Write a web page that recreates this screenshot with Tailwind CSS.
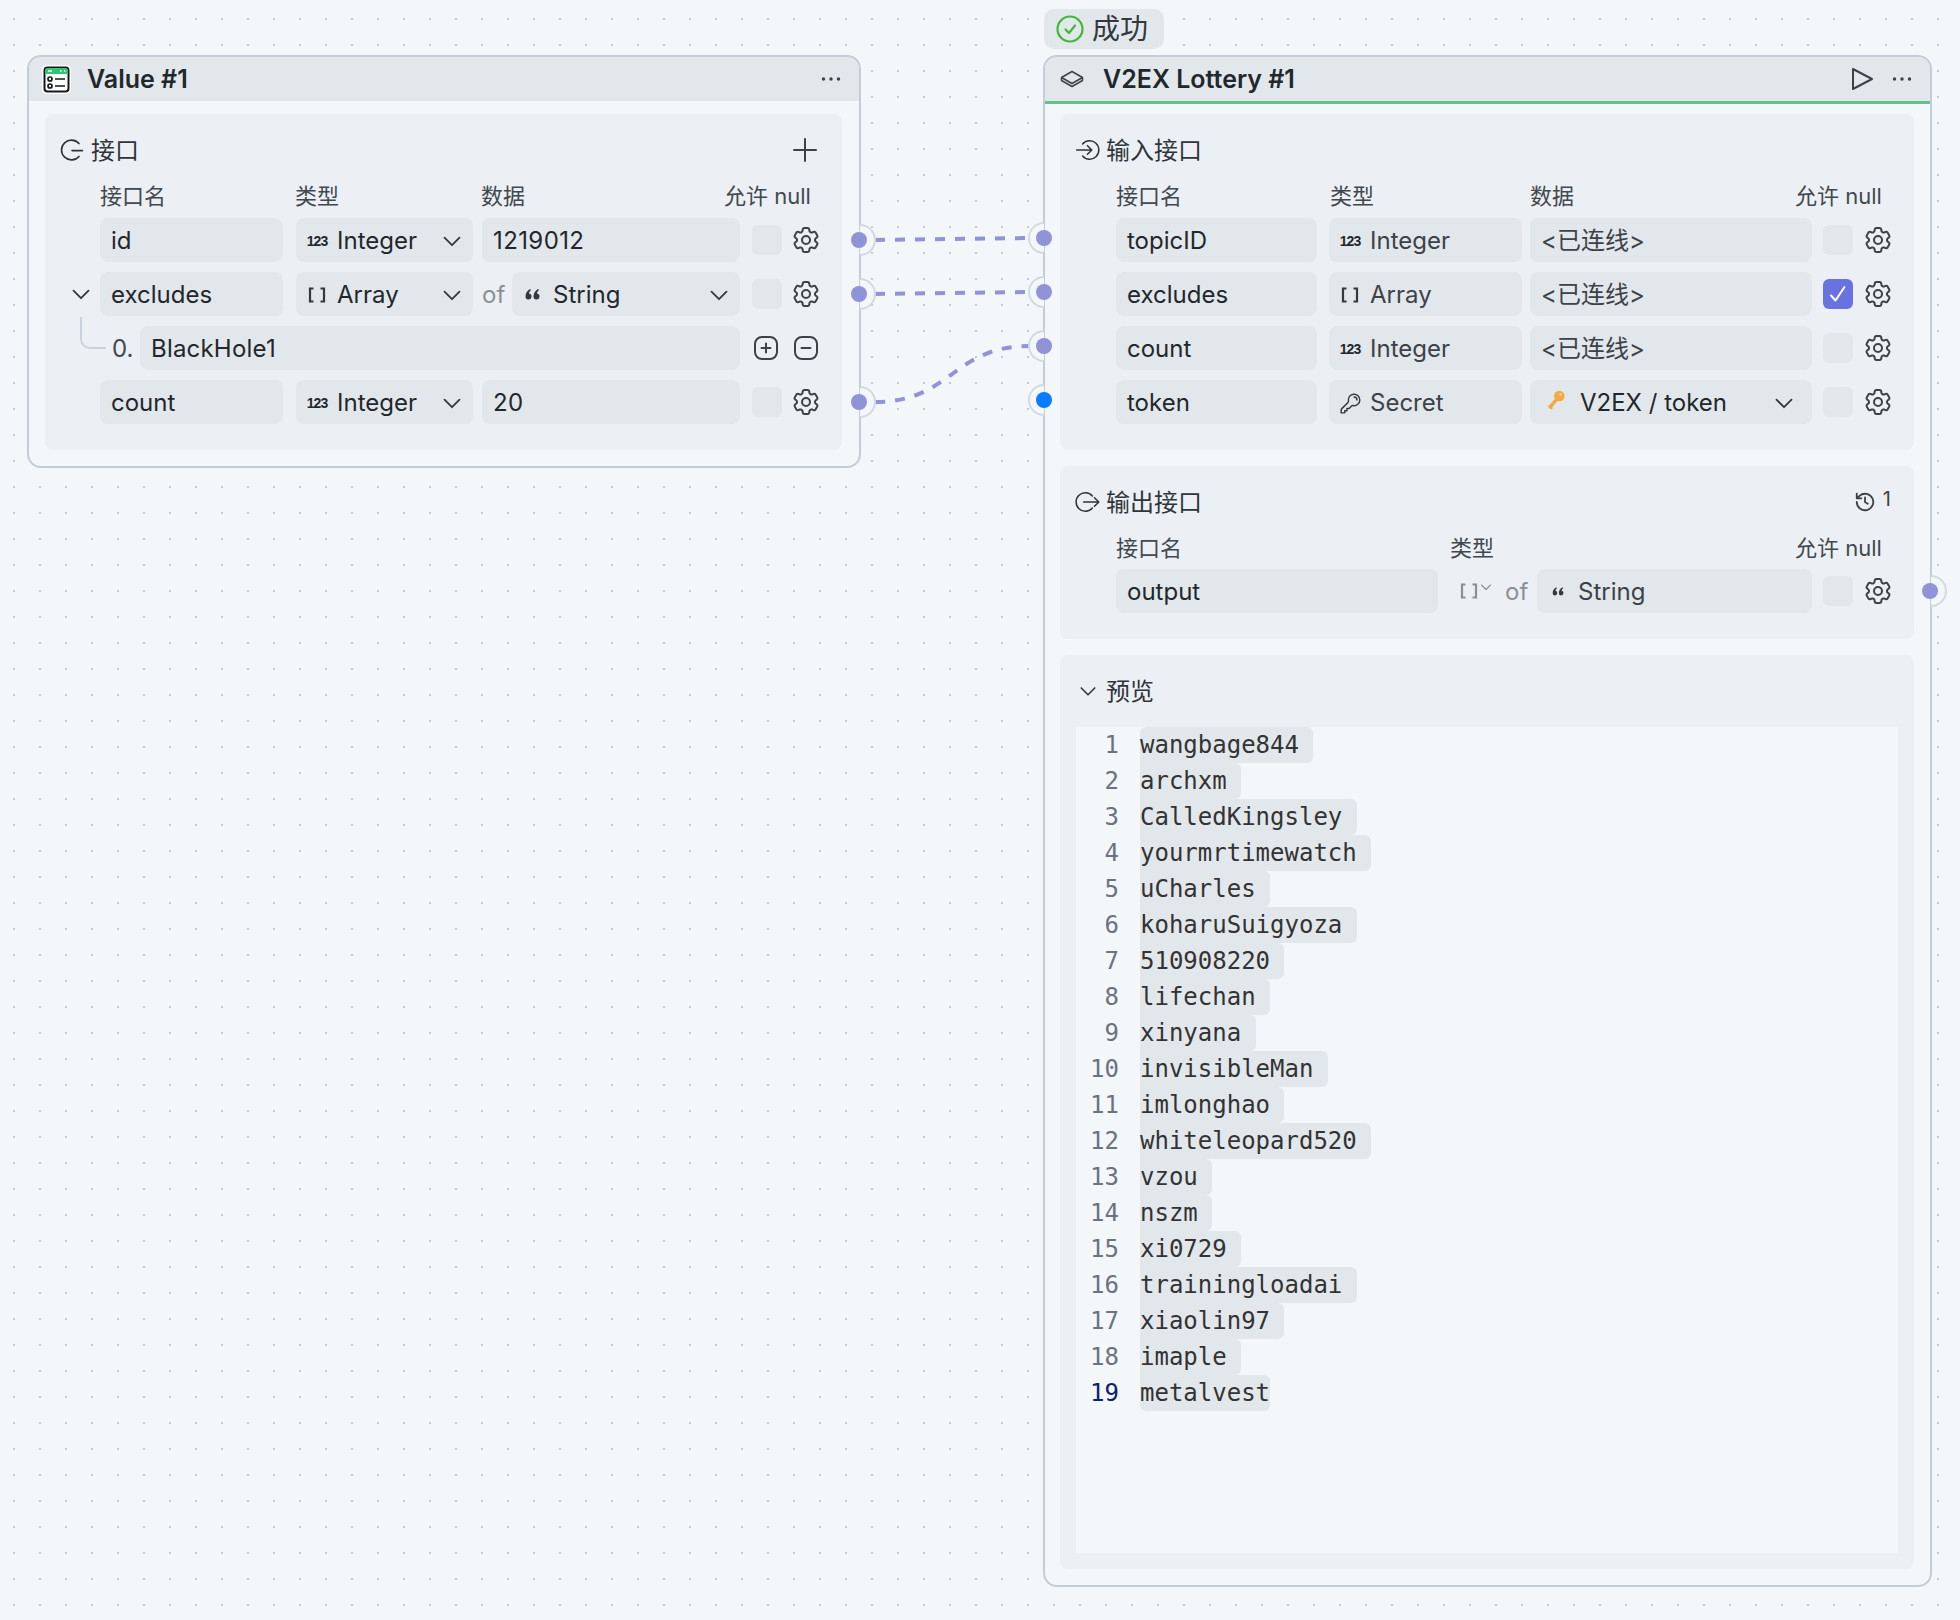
<!DOCTYPE html>
<html lang="en">
<head>
  <meta charset="UTF-8">
  <title>Workflow canvas</title>
  <script src="https://cdn.jsdelivr.net/npm/@tailwindcss/browser@4"></script>
</head>
<body class="m-0">
  <!-- shared icons -->
  <svg class="hidden">
    <symbol id="gear" viewBox="0 0 24 24"><path fill="none" stroke="currentColor" stroke-width="1.5" stroke-linecap="round" stroke-linejoin="round" d="M9.594 3.94c.09-.542.56-.94 1.11-.94h2.593c.55 0 1.02.398 1.11.94l.213 1.281c.063.374.313.686.645.87.074.04.147.083.22.127.325.196.72.257 1.075.124l1.217-.456a1.125 1.125 0 0 1 1.37.49l1.296 2.247a1.125 1.125 0 0 1-.26 1.431l-1.003.827c-.293.241-.438.613-.43.992a7.723 7.723 0 0 1 0 .255c-.008.378.137.75.43.991l1.004.827c.424.35.534.955.26 1.43l-1.298 2.247a1.125 1.125 0 0 1-1.369.491l-1.217-.456c-.355-.133-.75-.072-1.076.124a6.47 6.47 0 0 1-.22.128c-.331.183-.581.495-.644.869l-.213 1.281c-.09.543-.56.94-1.11.94h-2.594c-.55 0-1.019-.398-1.11-.94l-.213-1.281c-.062-.374-.312-.686-.644-.87a6.52 6.52 0 0 1-.22-.127c-.325-.196-.72-.257-1.076-.124l-1.217.456a1.125 1.125 0 0 1-1.369-.49l-1.297-2.247a1.125 1.125 0 0 1 .26-1.431l1.004-.827c.292-.24.437-.613.43-.991a6.932 6.932 0 0 1 0-.255c.007-.38-.138-.751-.43-.992l-1.004-.827a1.125 1.125 0 0 1-.26-1.43l1.297-2.247a1.125 1.125 0 0 1 1.37-.491l1.216.456c.356.133.751.072 1.076-.124.072-.044.146-.086.22-.128.332-.183.582-.495.644-.869l.214-1.28Z"/><circle cx="12" cy="12" r="3" fill="none" stroke="currentColor" stroke-width="1.5"/></symbol>
    <symbol id="chev" viewBox="0 0 24 24"><path fill="none" stroke="currentColor" stroke-width="2.2" stroke-linecap="round" stroke-linejoin="round" d="M3 8l9 9 9-9"/></symbol>
    <symbol id="brackets" viewBox="0 0 22 22"><path fill="none" stroke="currentColor" stroke-width="2.2" d="M7.5 4.5H4v13h3.5M14.500 4.500H18v13h-3.500"/></symbol>
    <symbol id="quote" viewBox="0 0 22 22"><path fill="currentColor" d="M8 5C5 7 3.500 9 3.500 12.500a3 3 0 1 0 3.500-3C7 8 8 7 9 6ZM16 5c-3 2-4.500 4-4.500 7.500a3 3 0 1 0 3.500-3c0-1.500 1-2.500 2-3.500Z"/></symbol>
    <symbol id="dots" viewBox="0 0 20 4"><circle cx="2.500" cy="2" r="1.700" fill="currentColor"/><circle cx="10" cy="2" r="1.700" fill="currentColor"/><circle cx="17.500" cy="2" r="1.700" fill="currentColor"/></symbol>
  </svg>

  <div class="relative w-[1960px] h-[1620px] overflow-hidden bg-[#f3f7fa] bg-[radial-gradient(circle,#c2cad3_1px,transparent_1.5px)] bg-[size:26px_26px] bg-[position:1px_6px] font-['Inter','Noto_Sans_CJK_SC',sans-serif] text-[24px] text-[#22272c]">

    <!-- edges -->
    <svg class="absolute left-0 top-0" width="1960" height="1620" fill="none" stroke="#9193d9" stroke-width="4" stroke-dasharray="10 10">
      <path d="M875 240 L1030 238"/>
      <path d="M875 294 L1030 292"/>
      <path d="M875 402 C952 402 952 346 1030 346"/>
    </svg>

    <!-- Value node -->
    <div class="absolute left-[27px] top-[55px] w-[834px] h-[413px] rounded-[14px] border-2 border-[#c3cdd8] bg-[#f3f7fa] overflow-hidden">
      <div class="h-[44px] bg-[#e2e7ec] flex items-center pl-[13px] pr-[18px]">
        <svg class="w-[29px] h-[29px]" viewBox="0 0 29 29">
          <rect width="29" height="29" rx="5" fill="#fff"/>
          <rect x="2.500" y="2.500" width="24" height="24" rx="3" fill="#fff" stroke="#14181b" stroke-width="2"/>
          <path d="M3 5.500a2.500 2.500 0 0 1 2.500-2.500h18a2.500 2.500 0 0 1 2.500 2.500V9H3Z" fill="#2fc573"/>
          <path d="M6 6h4M18 6h1.500M22 6h1.500" stroke="#fff" stroke-width="1.300"/>
          <circle cx="8" cy="14" r="2" fill="none" stroke="#14181b" stroke-width="1.700"/>
          <circle cx="8" cy="21" r="2" fill="none" stroke="#14181b" stroke-width="1.700"/>
          <path d="M13 14h10M13 21h10" stroke="#14181b" stroke-width="1.700"/>
        </svg>
        <span class="ml-[16px] mt-[2px] text-[25px] font-semibold">Value #1</span>
        <svg class="ml-auto w-[20px] h-[4px] text-[#3c4248]"><use href="#dots"/></svg>
      </div>

      <div class="mt-[13px] ml-[16px] w-[797px] h-[336px] rounded-[8px] bg-[#ecf0f4] pt-[18px]">
        <div class="h-[36px] flex items-center pl-[13px] pr-[24px]">
          <svg class="w-[28px] h-[28px] text-[#2f353a]" viewBox="0 0 24 24" fill="none" stroke="currentColor" stroke-width="1.400" stroke-linecap="round"><path d="M18 6.500A8.500 8.500 0 1 0 18 17.500M12 12.500h9"/></svg>
          <span class="ml-[5px] mt-[2px] text-[#2f353a]">接口</span>
          <svg class="ml-auto w-[26px] h-[26px] text-[#3c4248]" viewBox="0 0 26 26" fill="none" stroke="currentColor" stroke-width="2" stroke-linecap="round"><path d="M13 2v22M2 13h22"/></svg>
        </div>

        <div class="mt-[14px] mb-[8px] h-[28px] flex items-center text-[22px] text-[#41484f]">
          <span class="ml-[55px] w-[195px]">接口名</span>
          <span class="w-[186px]">类型</span>
          <span class="w-[243px]">数据</span>
          <span>允许 null</span>
        </div>

        <div class="flex flex-col gap-[10px]">
          <div class="flex items-center h-[44px] pl-[55px]">
            <div class="w-[183px] h-[44px] pt-[2px] rounded-[8px] bg-[#e2e7eb] flex items-center px-[11px]">id</div>
            <div class="ml-[13px] w-[177px] h-[44px] pt-[2px] rounded-[8px] bg-[#e2e7eb] flex items-center pl-[10px] pr-[11px]">
              <span class="w-[22px] text-[14px] font-semibold tracking-[-1px] text-center font-['Liberation_Sans']">123</span>
              <span class="ml-[9px]">Integer</span>
              <svg class="ml-auto w-[20px] h-[20px] text-[#33393f]"><use href="#chev"/></svg>
            </div>
            <div class="ml-[9px] w-[258px] h-[44px] pt-[2px] rounded-[8px] bg-[#e2e7eb] flex items-center px-[11px] tracking-[0.4px]">1219012</div>
            <div class="ml-[12px] w-[30px] h-[30px] rounded-[6px] bg-[#e2e7eb]"></div>
            <svg class="ml-[8px] w-[32px] h-[32px] text-[#3c4248]"><use href="#gear"/></svg>
          </div>

          <div class="flex items-center h-[44px]">
            <div class="w-[55px] flex justify-end pr-[9px]"><svg class="w-[20px] h-[20px] text-[#33393f]"><use href="#chev"/></svg></div>
            <div class="w-[183px] h-[44px] pt-[2px] rounded-[8px] bg-[#e2e7eb] flex items-center px-[11px]">excludes</div>
            <div class="ml-[13px] w-[177px] h-[44px] pt-[2px] rounded-[8px] bg-[#e2e7eb] flex items-center pl-[10px] pr-[11px]">
              <svg class="w-[22px] h-[22px] text-[#33393f]"><use href="#brackets"/></svg>
              <span class="ml-[9px]">Array</span>
              <svg class="ml-auto w-[20px] h-[20px] text-[#33393f]"><use href="#chev"/></svg>
            </div>
            <span class="ml-[9px] mt-[2px] w-[30px] text-[#8b9096]">of</span>
            <div class="w-[228px] h-[44px] pt-[2px] rounded-[8px] bg-[#e2e7eb] flex items-center pl-[10px] pr-[11px]">
              <svg class="w-[22px] h-[22px] text-[#33393f]"><use href="#quote"/></svg>
              <span class="ml-[9px]">String</span>
              <svg class="ml-auto w-[20px] h-[20px] text-[#33393f]"><use href="#chev"/></svg>
            </div>
            <div class="ml-[12px] w-[30px] h-[30px] rounded-[6px] bg-[#e2e7eb]"></div>
            <svg class="ml-[8px] w-[32px] h-[32px] text-[#3c4248]"><use href="#gear"/></svg>
          </div>

          <div class="relative flex items-center h-[44px]">
            <div class="absolute left-[35px] top-[-9px] w-[26px] h-[32px] border-l-2 border-b-2 border-[#cbd2d9] rounded-bl-[10px]"></div>
            <span class="ml-[67px] mt-[2px] w-[28px] text-[#41484f]">0.</span>
            <div class="w-[600px] h-[44px] pt-[2px] rounded-[8px] bg-[#e2e7eb] flex items-center px-[11px] tracking-[0.2px]">BlackHole1</div>
            <svg class="ml-[13px] w-[26px] h-[26px] text-[#3c4248]" viewBox="0 0 26 26" fill="none" stroke="currentColor" stroke-width="2" stroke-linecap="round"><rect x="2" y="2" width="22" height="22" rx="7"/><path d="M13 8.500v9M8.500 13h9"/></svg>
            <svg class="ml-[14px] w-[26px] h-[26px] text-[#3c4248]" viewBox="0 0 26 26" fill="none" stroke="currentColor" stroke-width="2" stroke-linecap="round"><rect x="2" y="2" width="22" height="22" rx="7"/><path d="M8.500 13h9"/></svg>
          </div>

          <div class="flex items-center h-[44px] pl-[55px]">
            <div class="w-[183px] h-[44px] pt-[2px] rounded-[8px] bg-[#e2e7eb] flex items-center px-[11px]">count</div>
            <div class="ml-[13px] w-[177px] h-[44px] pt-[2px] rounded-[8px] bg-[#e2e7eb] flex items-center pl-[10px] pr-[11px]">
              <span class="w-[22px] text-[14px] font-semibold tracking-[-1px] text-center font-['Liberation_Sans']">123</span>
              <span class="ml-[9px]">Integer</span>
              <svg class="ml-auto w-[20px] h-[20px] text-[#33393f]"><use href="#chev"/></svg>
            </div>
            <div class="ml-[9px] w-[258px] h-[44px] pt-[2px] rounded-[8px] bg-[#e2e7eb] flex items-center px-[11px] tracking-[0.4px]">20</div>
            <div class="ml-[12px] w-[30px] h-[30px] rounded-[6px] bg-[#e2e7eb]"></div>
            <svg class="ml-[8px] w-[32px] h-[32px] text-[#3c4248]"><use href="#gear"/></svg>
          </div>
        </div>
      </div>
    </div>

    <!-- status badge -->
    <div class="absolute left-[1044px] top-[9px] w-[120px] h-[40px] rounded-[10px] bg-[#e2e7ec] flex items-center pl-[12px] text-[28px] text-[#33383d]">
      <svg class="w-[28px] h-[28px]" viewBox="0 0 28 28" fill="none" stroke="#3dbb2f" stroke-width="2.200" stroke-linecap="round" stroke-linejoin="round"><circle cx="14" cy="14" r="12.500"/><path d="M9.500 14.500l3.500 3.500 6-7.500"/></svg>
      <span class="ml-[8px]">成功</span>
    </div>

    <!-- V2EX Lottery node -->
    <div class="absolute left-[1043px] top-[55px] w-[889px] h-[1532px] rounded-[14px] border-2 border-[#c3cdd8] bg-[#f3f7fa] overflow-hidden">
      <div class="h-[47px] border-b-[3px] border-[#65c08b] bg-[#e2e7ec] flex items-center pl-[15px] pr-[18px]">
        <svg class="w-[24px] h-[24px] text-[#3c4248]" viewBox="0 0 24 24" fill="none" stroke="currentColor" stroke-width="1.500" stroke-linejoin="round"><path d="M12 4.500l10.500 6-10.500 6-10.500-6ZM1.500 10.500v3l10.500 6 10.500-6v-3"/></svg>
        <span class="ml-[19px] mt-[2px] text-[25px] font-semibold">V2EX Lottery #1</span>
        <svg class="ml-auto w-[24px] h-[24px] text-[#3c4248]" viewBox="0 0 24 24" fill="none" stroke="currentColor" stroke-width="2" stroke-linejoin="round"><path d="M3 2l19 10-19 10Z"/></svg>
        <svg class="ml-[18px] w-[20px] h-[4px] text-[#3c4248]"><use href="#dots"/></svg>
      </div>

      <!-- inputs -->
      <div class="mt-[10px] ml-[15px] w-[854px] h-[336px] rounded-[8px] bg-[#ecf0f4] pt-[18px]">
        <div class="h-[36px] flex items-center pl-[15px]">
          <svg class="w-[26px] h-[26px] text-[#2f353a]" viewBox="0 0 24 24" fill="none" stroke="currentColor" stroke-width="1.400" stroke-linecap="round" stroke-linejoin="round"><path d="M7 6.500A8.500 8.500 0 1 1 7 17.500M1.500 12h14M11.500 8l4 4-4 4"/></svg>
          <span class="ml-[5px] mt-[2px] text-[#2f353a]">输入接口</span>
        </div>
        <div class="mt-[14px] mb-[8px] h-[28px] flex items-center text-[22px] text-[#41484f]">
          <span class="ml-[56px] w-[214px]">接口名</span>
          <span class="w-[200px]">类型</span>
          <span class="w-[265px]">数据</span>
          <span>允许 null</span>
        </div>
        <div class="flex flex-col gap-[10px] pl-[56px]">
          <div class="flex items-center h-[44px]">
            <div class="w-[201px] h-[44px] pt-[2px] rounded-[8px] bg-[#e2e7eb] flex items-center px-[11px]">topicID</div>
            <div class="ml-[12px] w-[193px] h-[44px] pt-[2px] rounded-[8px] bg-[#e2e7eb] flex items-center pl-[10px] text-[#3c4248]">
              <span class="w-[22px] text-[14px] font-semibold tracking-[-1px] text-center font-['Liberation_Sans'] text-[#22272c]">123</span>
              <span class="ml-[9px]">Integer</span>
            </div>
            <div class="ml-[8px] w-[282px] h-[44px] pt-[2px] rounded-[8px] bg-[#e2e7eb] flex items-center px-[11px] text-[#3c4248]">&lt;已连线&gt;</div>
            <div class="ml-[11px] w-[30px] h-[30px] rounded-[6px] bg-[#e2e7eb]"></div>
            <svg class="ml-[9px] w-[32px] h-[32px] text-[#3c4248]"><use href="#gear"/></svg>
          </div>
          <div class="flex items-center h-[44px]">
            <div class="w-[201px] h-[44px] pt-[2px] rounded-[8px] bg-[#e2e7eb] flex items-center px-[11px]">excludes</div>
            <div class="ml-[12px] w-[193px] h-[44px] pt-[2px] rounded-[8px] bg-[#e2e7eb] flex items-center pl-[10px] text-[#3c4248]">
              <svg class="w-[22px] h-[22px] text-[#33393f]"><use href="#brackets"/></svg>
              <span class="ml-[9px]">Array</span>
            </div>
            <div class="ml-[8px] w-[282px] h-[44px] pt-[2px] rounded-[8px] bg-[#e2e7eb] flex items-center px-[11px] text-[#3c4248]">&lt;已连线&gt;</div>
            <div class="ml-[11px] w-[30px] h-[30px] rounded-[6px] bg-[#6a72e0] flex items-center justify-center">
              <svg class="w-[22px] h-[22px]" viewBox="0 0 22 22" fill="none" stroke="#fff" stroke-width="2" stroke-linecap="round" stroke-linejoin="round"><path d="M4 12.500l4.500 5L17.500 4"/></svg>
            </div>
            <svg class="ml-[9px] w-[32px] h-[32px] text-[#3c4248]"><use href="#gear"/></svg>
          </div>
          <div class="flex items-center h-[44px]">
            <div class="w-[201px] h-[44px] pt-[2px] rounded-[8px] bg-[#e2e7eb] flex items-center px-[11px]">count</div>
            <div class="ml-[12px] w-[193px] h-[44px] pt-[2px] rounded-[8px] bg-[#e2e7eb] flex items-center pl-[10px] text-[#3c4248]">
              <span class="w-[22px] text-[14px] font-semibold tracking-[-1px] text-center font-['Liberation_Sans'] text-[#22272c]">123</span>
              <span class="ml-[9px]">Integer</span>
            </div>
            <div class="ml-[8px] w-[282px] h-[44px] pt-[2px] rounded-[8px] bg-[#e2e7eb] flex items-center px-[11px] text-[#3c4248]">&lt;已连线&gt;</div>
            <div class="ml-[11px] w-[30px] h-[30px] rounded-[6px] bg-[#e2e7eb]"></div>
            <svg class="ml-[9px] w-[32px] h-[32px] text-[#3c4248]"><use href="#gear"/></svg>
          </div>
          <div class="flex items-center h-[44px]">
            <div class="w-[201px] h-[44px] pt-[2px] rounded-[8px] bg-[#e2e7eb] flex items-center px-[11px]">token</div>
            <div class="ml-[12px] w-[193px] h-[44px] pt-[2px] rounded-[8px] bg-[#e2e7eb] flex items-center pl-[10px] text-[#3c4248]">
              <svg class="w-[23px] h-[23px] text-[#33393f]" viewBox="0 0 24 24" fill="none" stroke="currentColor" stroke-width="1.500" stroke-linecap="round" stroke-linejoin="round"><path d="M15.750 5.250a3 3 0 0 1 3 3m3 0a6 6 0 0 1-7.029 5.912c-.563-.097-1.159.026-1.563.43L10.500 17.250H8.250v2.250H6v2.250H2.250v-2.818c0-.597.237-1.170.659-1.591l6.499-6.499c.404-.404.527-1 .43-1.563A6 6 0 1 1 21.750 8.250Z"/></svg>
              <span class="ml-[8px]">Secret</span>
            </div>
            <div class="ml-[8px] w-[282px] h-[44px] pt-[2px] rounded-[8px] bg-[#e2e7eb] flex items-center pl-[16px] pr-[18px]">
              <svg class="w-[20px] h-[22px] mb-[4px]" viewBox="0 0 18 20"><circle cx="12" cy="5.500" r="4.800" fill="#f5a742"/><path d="M9.500 8.500L3 16.500" stroke="#f5a742" stroke-width="3"/><path d="M2.500 14l3 3" stroke="#f5a742" stroke-width="2"/><circle cx="13" cy="4" r="1.200" fill="#fbd28b"/></svg>
              <span class="ml-[14px]">V2EX / token</span>
              <svg class="ml-auto w-[20px] h-[20px] text-[#33393f]"><use href="#chev"/></svg>
            </div>
            <div class="ml-[11px] w-[30px] h-[30px] rounded-[6px] bg-[#e2e7eb]"></div>
            <svg class="ml-[9px] w-[32px] h-[32px] text-[#3c4248]"><use href="#gear"/></svg>
          </div>
        </div>
      </div>

      <!-- outputs -->
      <div class="mt-[16px] ml-[15px] w-[854px] h-[173px] rounded-[8px] bg-[#ecf0f4] pt-[18px]">
        <div class="h-[36px] flex items-center pl-[15px] pr-[23px]">
          <svg class="w-[26px] h-[26px] text-[#2f353a]" viewBox="0 0 24 24" fill="none" stroke="currentColor" stroke-width="1.400" stroke-linecap="round" stroke-linejoin="round"><path d="M16 6.500A8.500 8.500 0 1 0 16 17.500M8 12h14M18 8l4 4-4 4"/></svg>
          <span class="ml-[5px] mt-[2px] text-[#2f353a]">输出接口</span>
          <svg class="ml-auto w-[22px] h-[22px] text-[#3c4248]" viewBox="0 0 24 24" fill="none" stroke="currentColor" stroke-width="2" stroke-linecap="round" stroke-linejoin="round"><path d="M3 12a9 9 0 1 0 3-6.700L3 8M3 3v5h5M12 7v5l3 2"/></svg>
          <span class="ml-[7px] mb-[6px] text-[20px] text-[#3c4248]">1</span>
        </div>
        <div class="mt-[14px] mb-[7px] h-[28px] flex items-center text-[22px] text-[#41484f]">
          <span class="ml-[56px] w-[334px]">接口名</span>
          <span class="w-[345px]">类型</span>
          <span>允许 null</span>
        </div>
        <div class="flex items-center h-[44px] pl-[56px]">
          <div class="w-[322px] h-[44px] pt-[2px] rounded-[8px] bg-[#e2e7eb] flex items-center px-[11px]">output</div>
          <svg class="ml-[20px] w-[22px] h-[22px] text-[#8b9096]"><use href="#brackets"/></svg>
          <svg class="mb-[8px] w-[12px] h-[12px] text-[#8b9096]"><use href="#chev"/></svg>
          <span class="ml-[13px] mt-[2px] w-[32px] text-[#8b9096]">of</span>
          <div class="w-[275px] h-[44px] pt-[2px] rounded-[8px] bg-[#e2e7eb] flex items-center pl-[13px] text-[#3c4248]">
            <svg class="w-[17px] h-[22px] text-[#33393f]" viewBox="0 0 22 22"><use href="#quote"/></svg>
            <span class="ml-[11px]">String</span>
          </div>
          <div class="ml-[11px] w-[30px] h-[30px] rounded-[6px] bg-[#e2e7eb]"></div>
          <svg class="ml-[9px] w-[32px] h-[32px] text-[#3c4248]"><use href="#gear"/></svg>
        </div>
      </div>

      <!-- preview -->
      <div class="mt-[16px] ml-[15px] w-[854px] h-[914px] rounded-[8px] bg-[#ecf0f4] pt-[18px]">
        <div class="h-[36px] flex items-center pl-[19px] text-[#2f353a]">
          <svg class="w-[18px] h-[18px] text-[#33393f]"><use href="#chev"/></svg>
          <span class="ml-[9px] mt-[2px]">预览</span>
        </div>
        <div class="mt-[18px] mx-[16px] h-[826px] bg-[#f3f7fa] font-['DejaVu_Sans_Mono',monospace] text-[24px] leading-[36px] text-[#333] grid grid-cols-[43px_1fr] gap-x-[21px] auto-rows-[36px]">
          <span class="text-right text-[#6b7280]">1</span><span><span class="inline-block h-[36px] pr-[14.450px] bg-[#e2e7ec] rounded-tl-[6px] rounded-r-[6px]">wangbage844</span></span>
          <span class="text-right text-[#6b7280]">2</span><span><span class="inline-block h-[36px] pr-[14.450px] bg-[#e2e7ec] rounded-r-[6px]">archxm</span></span>
          <span class="text-right text-[#6b7280]">3</span><span><span class="inline-block h-[36px] pr-[14.450px] bg-[#e2e7ec] rounded-r-[6px]">CalledKingsley</span></span>
          <span class="text-right text-[#6b7280]">4</span><span><span class="inline-block h-[36px] pr-[14.450px] bg-[#e2e7ec] rounded-r-[6px]">yourmrtimewatch</span></span>
          <span class="text-right text-[#6b7280]">5</span><span><span class="inline-block h-[36px] pr-[14.450px] bg-[#e2e7ec] rounded-r-[6px]">uCharles</span></span>
          <span class="text-right text-[#6b7280]">6</span><span><span class="inline-block h-[36px] pr-[14.450px] bg-[#e2e7ec] rounded-r-[6px]">koharuSuigyoza</span></span>
          <span class="text-right text-[#6b7280]">7</span><span><span class="inline-block h-[36px] pr-[14.450px] bg-[#e2e7ec] rounded-r-[6px]">510908220</span></span>
          <span class="text-right text-[#6b7280]">8</span><span><span class="inline-block h-[36px] pr-[14.450px] bg-[#e2e7ec] rounded-r-[6px]">lifechan</span></span>
          <span class="text-right text-[#6b7280]">9</span><span><span class="inline-block h-[36px] pr-[14.450px] bg-[#e2e7ec] rounded-r-[6px]">xinyana</span></span>
          <span class="text-right text-[#6b7280]">10</span><span><span class="inline-block h-[36px] pr-[14.450px] bg-[#e2e7ec] rounded-r-[6px]">invisibleMan</span></span>
          <span class="text-right text-[#6b7280]">11</span><span><span class="inline-block h-[36px] pr-[14.450px] bg-[#e2e7ec] rounded-r-[6px]">imlonghao</span></span>
          <span class="text-right text-[#6b7280]">12</span><span><span class="inline-block h-[36px] pr-[14.450px] bg-[#e2e7ec] rounded-r-[6px]">whiteleopard520</span></span>
          <span class="text-right text-[#6b7280]">13</span><span><span class="inline-block h-[36px] pr-[14.450px] bg-[#e2e7ec] rounded-r-[6px]">vzou</span></span>
          <span class="text-right text-[#6b7280]">14</span><span><span class="inline-block h-[36px] pr-[14.450px] bg-[#e2e7ec] rounded-r-[6px]">nszm</span></span>
          <span class="text-right text-[#6b7280]">15</span><span><span class="inline-block h-[36px] pr-[14.450px] bg-[#e2e7ec] rounded-r-[6px]">xi0729</span></span>
          <span class="text-right text-[#6b7280]">16</span><span><span class="inline-block h-[36px] pr-[14.450px] bg-[#e2e7ec] rounded-r-[6px]">trainingloadai</span></span>
          <span class="text-right text-[#6b7280]">17</span><span><span class="inline-block h-[36px] pr-[14.450px] bg-[#e2e7ec] rounded-r-[6px]">xiaolin97</span></span>
          <span class="text-right text-[#6b7280]">18</span><span><span class="inline-block h-[36px] pr-[14.450px] bg-[#e2e7ec] rounded-r-[6px]">imaple</span></span>
          <span class="text-right text-[#0b216f]">19</span><span><span class="inline-block h-[36px] bg-[#e2e7ec] rounded-b-[6px] rounded-tr-[6px]">metalvest</span></span>
        </div>
      </div>
    </div>

    <!-- ports: left node, outgoing -->
    <div class="absolute left-[860px] top-[224px] w-[16px] h-[32px] rounded-r-full border-2 border-l-0 border-[#d2d9e1] bg-[#f3f7fa]"></div>
    <div class="absolute left-[860px] top-[278px] w-[16px] h-[32px] rounded-r-full border-2 border-l-0 border-[#d2d9e1] bg-[#f3f7fa]"></div>
    <div class="absolute left-[860px] top-[386px] w-[16px] h-[32px] rounded-r-full border-2 border-l-0 border-[#d2d9e1] bg-[#f3f7fa]"></div>
    <div class="absolute left-[851px] top-[232px] w-[16px] h-[16px] rounded-full bg-[#9193d9]"></div>
    <div class="absolute left-[851px] top-[286px] w-[16px] h-[16px] rounded-full bg-[#9193d9]"></div>
    <div class="absolute left-[851px] top-[394px] w-[16px] h-[16px] rounded-full bg-[#9193d9]"></div>

    <!-- ports: right node, incoming -->
    <div class="absolute left-[1028px] top-[222px] w-[16px] h-[32px] rounded-l-full border-2 border-r-0 border-[#d2d9e1] bg-[#f3f7fa]"></div>
    <div class="absolute left-[1028px] top-[276px] w-[16px] h-[32px] rounded-l-full border-2 border-r-0 border-[#d2d9e1] bg-[#f3f7fa]"></div>
    <div class="absolute left-[1028px] top-[330px] w-[16px] h-[32px] rounded-l-full border-2 border-r-0 border-[#d2d9e1] bg-[#f3f7fa]"></div>
    <div class="absolute left-[1028px] top-[384px] w-[16px] h-[32px] rounded-l-full border-2 border-r-0 border-[#d2d9e1] bg-[#f3f7fa]"></div>
    <div class="absolute left-[1036px] top-[230px] w-[16px] h-[16px] rounded-full bg-[#9193d9]"></div>
    <div class="absolute left-[1036px] top-[284px] w-[16px] h-[16px] rounded-full bg-[#9193d9]"></div>
    <div class="absolute left-[1036px] top-[338px] w-[16px] h-[16px] rounded-full bg-[#9193d9]"></div>
    <div class="absolute left-[1036px] top-[392px] w-[16px] h-[16px] rounded-full bg-[#0a7cff]"></div>

    <!-- port: right node, outgoing -->
    <div class="absolute left-[1931px] top-[575px] w-[16px] h-[32px] rounded-r-full border-2 border-l-0 border-[#d2d9e1] bg-[#f3f7fa]"></div>
    <div class="absolute left-[1922px] top-[583px] w-[16px] h-[16px] rounded-full bg-[#9193d9]"></div>
  </div>
</body>
</html>
